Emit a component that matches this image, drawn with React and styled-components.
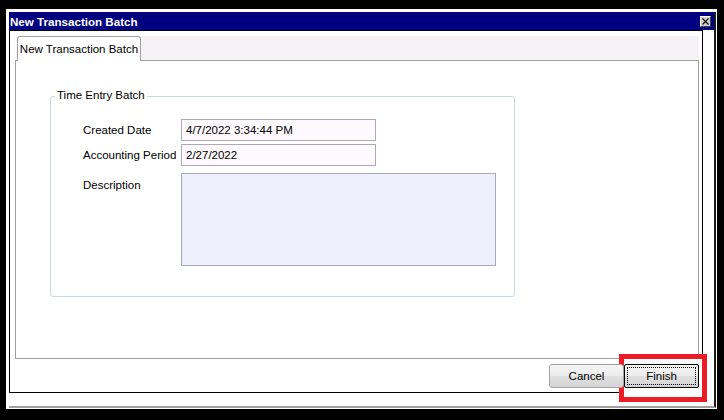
import React from "react";
import styled, { createGlobalStyle } from "styled-components";

const GlobalStyle = createGlobalStyle`
  html, body {
    margin: 0;
    padding: 0;
    background: #000;
    width: 724px;
    height: 420px;
    overflow: hidden;
  }
  *, *::before, *::after { box-sizing: border-box; }
  #root { padding-top: 9px; padding-left: 6px; }
`;

const Frame = styled.div`
  width: 711px;
  height: 400px;
  background: #fff;
  padding: 3px 1px 1px 3px;
  font-family: "Liberation Sans", Arial, sans-serif;
  font-size: 11.5px;
  color: #000;
`;

const Column = styled.div`
  display: flex;
  flex-direction: column;
  height: 396px;
  border-right: 2px solid #1a1a1a;
  border-bottom: 2px solid #a0a0a0;
`;

const TitleBar = styled.div`
  height: 18px;
  flex: none;
  background: #000080;
  color: #fff;
  font-weight: bold;
  font-size: 11.6px;
  display: flex;
  align-items: center;
  justify-content: space-between;
  padding: 0 3px 0 1px;
`;

const CloseBox = styled.div`
  width: 11px;
  height: 11px;
  background: #d4d0c8;
  border: 1px solid;
  border-color: #fff #404040 #404040 #fff;
  display: flex;
  align-items: center;
  justify-content: center;
`;

const Client = styled.div`
  width: 694px;
  height: 363px;
  flex: none;
  border: 1px solid #000;
  padding: 5px 3px 3px 5px;
  display: flex;
  flex-direction: column;
`;

const TabStrip = styled.div`
  height: 24px;
  display: flex;
  align-items: flex-start;
  background: #fff;
`;

const Tab = styled.div`
  margin-left: 2px;
  width: 124px;
  height: 25px;
  border: 1px solid #a0a0a0;
  border-bottom: none;
  border-radius: 3px 3px 0 0;
  background: #fff;
  position: relative;
  z-index: 1;
  display: flex;
  justify-content: center;
  padding-top: 6px;
  line-height: 13px;
`;

const StripFiller = styled.div`
  flex: 1;
  height: 24px;
  background: #f6f1f6;
`;

const Page = styled.div`
  height: 299px;
  border: 1px solid #a0a0a0;
  background: #fff;
  padding: 35px 0 0 34px;
`;

const GroupBox = styled.div`
  position: relative;
  width: 465px;
  height: 201px;
  border: 1px solid #cbd9e4;
  border-radius: 3px;
  padding: 22px 0 0 32px;
`;

const Legend = styled.div`
  position: absolute;
  top: -8px;
  left: 4px;
  padding: 0 2px;
  background: #fff;
  line-height: 13px;
`;

const FieldRow = styled.div`
  display: flex;
  align-items: ${(p) => (p.$top ? "flex-start" : "center")};
  margin-top: ${(p) => p.$gap || 0}px;
`;

const Label = styled.div`
  width: 98px;
  flex: none;
  line-height: 13px;
  padding-top: ${(p) => p.$pad || 0}px;
`;

const TextBox = styled.div`
  width: 195px;
  height: 22px;
  border: 1px solid #a9a9b7;
  background: #fdf9fd;
  padding: 0 4px;
  display: flex;
  align-items: center;
`;

const Memo = styled.div`
  width: 315px;
  height: 93px;
  border: 1px solid #a9a9b7;
  background: #efeefc;
`;

const ButtonRow = styled.div`
  display: flex;
  justify-content: flex-end;
  margin-top: 5px;
  height: 24px;
`;

const Button = styled.div`
  position: relative;
  z-index: 1;
  width: 75px;
  height: 24px;
  display: flex;
  align-items: center;
  justify-content: center;
  border: 1px solid ${(p) => (p.$default ? "#000" : "#a3a3a3")};
  border-radius: ${(p) => (p.$default ? "2px" : "3px")};
  background: linear-gradient(#f5f5f5 0%, #ececec 48%, #dfdfdf 52%, #d5d5d5 100%);
  &::after {
    content: "";
    display: ${(p) => (p.$default ? "block" : "none")};
    position: absolute;
    inset: 2px;
    border: 1px dotted #000;
  }
`;

const HighlightWrap = styled.div`
  position: relative;
`;

const Annotation = styled.div`
  position: absolute;
  left: -5px;
  top: -10px;
  width: 88px;
  height: 48px;
  border: 5px solid #ed1c24;
  background: #fff;
  z-index: 0;
`;

export default function App() {
  return (
    <>
      <GlobalStyle />
      <Frame>
        <Column>
          <TitleBar>
            <span>New Transaction Batch</span>
            <CloseBox>
              <svg width="7" height="7" viewBox="0 0 7 7">
                <path d="M0.5 0.5 L6.5 6.5 M6.5 0.5 L0.5 6.5" stroke="#000" strokeWidth="1.1" />
              </svg>
            </CloseBox>
          </TitleBar>
          <Client>
            <TabStrip>
              <Tab>New Transaction Batch</Tab>
              <StripFiller />
            </TabStrip>
            <Page>
              <GroupBox>
                <Legend>Time Entry Batch</Legend>
                <FieldRow>
                  <Label>Created Date</Label>
                  <TextBox>4/7/2022 3:34:44 PM</TextBox>
                </FieldRow>
                <FieldRow $gap={3}>
                  <Label>Accounting Period</Label>
                  <TextBox>2/27/2022</TextBox>
                </FieldRow>
                <FieldRow $gap={7} $top>
                  <Label $pad={6}>Description</Label>
                  <Memo />
                </FieldRow>
              </GroupBox>
            </Page>
            <ButtonRow>
              <Button>Cancel</Button>
              <HighlightWrap>
                <Annotation />
                <Button $default>Finish</Button>
              </HighlightWrap>
            </ButtonRow>
          </Client>
        </Column>
      </Frame>
    </>
  );
}
